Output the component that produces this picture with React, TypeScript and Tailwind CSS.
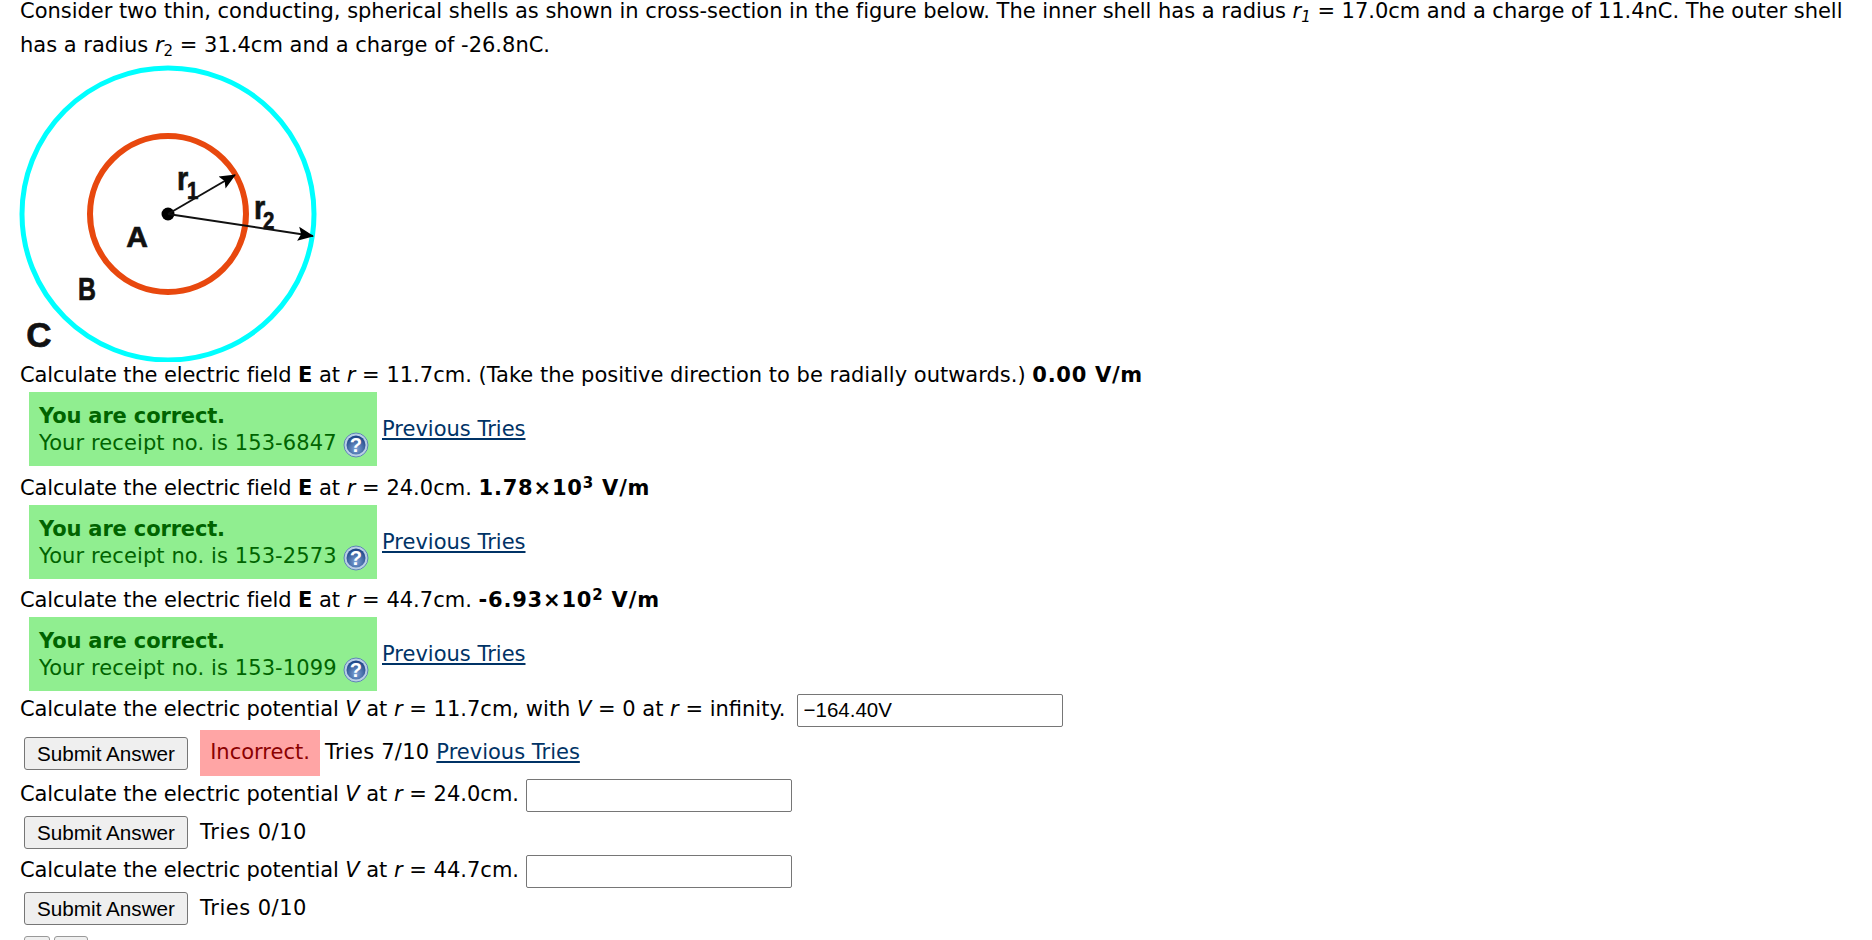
const font = { fontFamily: '"DejaVu Sans", Verdana, sans-serif' };

function HelpIcon() {
  return (
    <svg width="26" height="26" viewBox="0 0 26 26" className="shrink-0">
      <defs>
        <radialGradient id="helpFill" cx="50%" cy="70%" r="65%">
          <stop offset="0%" stopColor="#7ea3d6" />
          <stop offset="100%" stopColor="#1f4788" />
        </radialGradient>
      </defs>
      <circle cx="13" cy="13" r="12" fill="#b9cfe6" stroke="#5f86b5" strokeWidth="1" />
      <circle cx="13" cy="13" r="9.5" fill="url(#helpFill)" />
      <text x="13" y="20" textAnchor="middle" fontSize="20" fontWeight="700" fill="#fff" fontFamily="Liberation Sans, sans-serif">
        ?
      </text>
    </svg>
  );
}

function Shells() {
  return (
    <svg width="300" height="297" viewBox="18 65 300 297" className="block">
      <defs>
        <marker id="head" viewBox="0 0 8 8" markerWidth="8" markerHeight="8" refX="7.5" refY="4" orient="auto">
          <path d="M0 0.5 L8 4 L0 7.5 L1.5 4 Z" fill="#000" />
        </marker>
      </defs>
      <circle cx="168" cy="214" r="146" fill="none" stroke="#0ff" strokeWidth="5" />
      <circle cx="168" cy="214" r="78" fill="none" stroke="#e8480e" strokeWidth="6" />
      <circle cx="168" cy="214" r="6.5" fill="#000" />
      <line x1="168" y1="214" x2="235" y2="175" stroke="#111" strokeWidth="2" markerEnd="url(#head)" />
      <line x1="168" y1="214" x2="313" y2="236" stroke="#111" strokeWidth="2" markerEnd="url(#head)" />
      <g fontFamily="Liberation Sans, sans-serif" fontWeight="700" fill="#111" stroke="#111" strokeWidth="0.7">
        <text fontSize="30" textAnchor="middle" transform="translate(137 247)">A</text>
        <text fontSize="31" textAnchor="middle" transform="translate(87 300) scale(0.8 1)">B</text>
        <text fontSize="35" textAnchor="middle" transform="translate(39 347)">C</text>
        <text fontSize="34" transform="translate(177 190) scale(0.85 1)">r</text>
        <text fontSize="24" transform="translate(187 199) scale(0.85 1)">1</text>
        <text fontSize="34" transform="translate(254 219) scale(0.85 1)">r</text>
        <text fontSize="24" transform="translate(263 229) scale(0.85 1)">2</text>
      </g>
    </svg>
  );
}

function PreviousTries() {
  return <a className="text-[#003366] underline underline-offset-2">Previous Tries</a>;
}

function Correct({ receipt }: { receipt: string }) {
  return (
    <div className="flex ml-[9px] h-[74px] items-stretch">
      <div className="w-[348px] bg-[#90ee90] text-[#006400] pl-[10px] pt-[11px] leading-[27px]">
        <div className="font-bold tracking-[-0.15px] -mb-[1px]">You are correct.</div>
        <div className="flex items-center gap-[6px] whitespace-nowrap tracking-[0.1px]">
          Your receipt no. is {receipt}
          <span className="mt-[3px]"><HelpIcon /></span>
        </div>
      </div>
      <div className="ml-[5px] mt-[22px]">
        <PreviousTries />
      </div>
    </div>
  );
}

function Line({ children, className = "" }: { children: React.ReactNode; className?: string }) {
  return <div className={`flex items-center whitespace-pre h-[34px] pt-[2px] ${className}`}>{children}</div>;
}

function Field({ r, tail }: { r: string; tail: React.ReactNode }) {
  return (
    <>
      <span className="tracking-[-0.14px]">Calculate the electric field </span>
      <b>E</b> at <i>r</i> = {r}. {tail}
    </>
  );
}

function Potential() {
  return <span className="tracking-[-0.15px]">Calculate the electric potential </span>;
}

function SubmitButton() {
  return (
    <button
      className="w-[164px] h-[33px] pb-[2px] shrink-0 rounded-[3px] border border-[#767676] bg-[#efefef] text-[20.7px] text-black"
      style={{ fontFamily: '"Liberation Sans", Arial, sans-serif' }}
    >
      Submit Answer
    </button>
  );
}

function AnswerInput({ value = "", className = "ml-[7px]" }: { value?: string; className?: string }) {
  return (
    <input
      readOnly
      value={value}
      className={`w-[266px] h-[33px] rounded-[2px] border border-[#767676] bg-white px-[6px] text-[20.5px] text-black ${className}`}
      style={{ fontFamily: '"Liberation Sans", Arial, sans-serif' }}
    />
  );
}

export default function App() {
  return (
    <div className="h-[940px] overflow-hidden bg-white text-black text-[21px] pl-5" style={font}>
      <div className="leading-[23px] h-[27px] whitespace-nowrap tracking-[-0.03px]">
        Consider two thin, conducting, spherical shells as shown in cross-section in the figure below. The inner shell has a radius{" "}
        <i>r<sub className="text-[15px]">1</sub></i> = 17.0cm and a charge of 11.4nC. The outer shell
      </div>
      <div className="leading-[36px] h-[34px] whitespace-nowrap">
        has a radius <i>r</i><sub className="text-[15px]">2</sub> = 31.4cm and a charge of -26.8nC.
      </div>
      <div className="mt-1 -ml-[2px]">
        <Shells />
      </div>

      <Line className="!h-[30px] pb-1">
        <Field r="11.7cm" tail={<>(Take the positive direction to be radially outwards.) </>} />
        <b className="tracking-[0.7px]">0.00 V/m</b>
      </Line>
      <Correct receipt="153-6847" />

      <Line className="mt-[5px]">
        <Field r="24.0cm" tail={null} />
        <b className="tracking-[0.8px]">1.78×10<sup className="text-[15px]">3</sup> V/m</b>
      </Line>
      <Correct receipt="153-2573" />

      <Line className="mt-[4px]">
        <Field r="44.7cm" tail={null} />
        <b className="tracking-[0.8px]">-6.93×10<sup className="text-[15px]">2</sup> V/m</b>
      </Line>
      <Correct receipt="153-1099" />

      <Line className="mt-[1px]">
        <Potential /><i>V</i> at <i>r</i> = 11.7cm, with <i>V</i> = 0 at <i>r</i> = infinity.
        <AnswerInput value="−164.40V" className="ml-[11px]" />
      </Line>
      <div className="flex items-center h-[46px] ml-[4px] mt-[4px] whitespace-pre">
        <SubmitButton />
        <div className="ml-3 h-[46px] w-[120px] bg-[#ffa5a5] text-[#8b0000] flex items-center justify-center">Incorrect.</div>
        <span className="ml-[5px] tracking-[0.25px]">Tries 7/10 </span>
        <PreviousTries />
      </div>

      <Line className="mt-[1px]">
        <Potential /><i>V</i> at <i>r</i> = 24.0cm.
        <AnswerInput />
      </Line>
      <div className="flex items-center h-[33px] ml-[4px] mt-[5px]">
        <SubmitButton />
        <span className="ml-3 tracking-[0.5px] pt-[1px]">Tries 0/10</span>
      </div>

      <Line className="mt-[4px]">
        <Potential /><i>V</i> at <i>r</i> = 44.7cm.
        <AnswerInput />
      </Line>
      <div className="flex items-center h-[33px] ml-[4px] mt-[5px]">
        <SubmitButton />
        <span className="ml-3 tracking-[0.5px] pt-[1px]">Tries 0/10</span>
      </div>

      <div className="flex gap-1 ml-[4px] mt-[11px]">
        <div className="w-[26px] h-[20px] rounded-[3px] border border-[#999] bg-[#efefef]" />
        <div className="w-[34px] h-[20px] rounded-[3px] border border-[#999] bg-[#efefef]" />
      </div>
    </div>
  );
}
